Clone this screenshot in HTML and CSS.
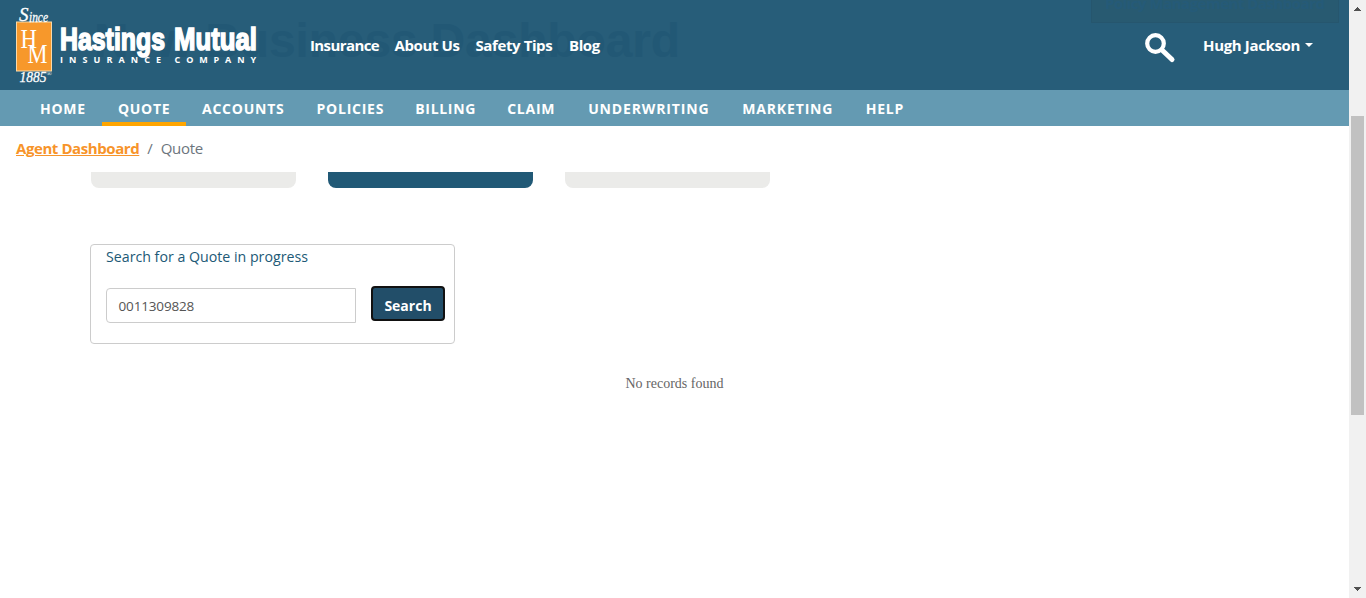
FILE: index.html
```html
<!DOCTYPE html>
<html lang="en">
<head>
<meta charset="utf-8">
<title>Quote - Hastings Mutual</title>
<link rel="stylesheet" href="styles.css">
</head>
<body>
<div class="page">
  <header class="topbar">
    <svg class="ghost" width="1349" height="90" aria-hidden="true">
      <text class="ghost-title" x="94" y="57" textLength="586">New Business Dashboard</text>
      <rect x="1091" y="-10" width="248" height="33" fill="#285a71"/>
      <path d="M1091.5 0V22.5H1338.5V0" fill="none" stroke="#26566e"/>
      <text class="ghost-button" x="1105" y="9" textLength="220">Policy Management Dashboard</text>
    </svg>
    <svg class="logo" width="262" height="90" role="img" aria-label="Hastings Mutual Insurance Company">
      <rect x="16.5" y="22" width="35" height="49" fill="#f7982b" stroke="#fbd9a8" stroke-width="1"/>
      <g class="serif">
        <text x="19" y="21" class="swash" font-size="19">S</text>
        <text x="29" y="21.500" class="swash" font-size="14" textLength="19" lengthAdjust="spacingAndGlyphs">ince</text>
        <text x="20.5" y="48" font-size="28" textLength="16.5" lengthAdjust="spacingAndGlyphs">H</text>
        <text x="27.5" y="63" font-size="28" textLength="20" lengthAdjust="spacingAndGlyphs">M</text>
        <text x="19.5" y="82" class="swash" font-size="15.500" textLength="27" lengthAdjust="spacingAndGlyphs">1885</text>
        <text x="46.500" y="76" font-size="7">®</text>
      </g>
      <g class="wordmark">
        <text x="60" y="50" textLength="105" lengthAdjust="spacingAndGlyphs">Hastings</text>
        <text x="174" y="50" textLength="83" lengthAdjust="spacingAndGlyphs">Mutual</text>
      </g>
      <g class="tagline">
        <text x="60" y="63" textLength="101">INSURANCE</text>
        <text x="174.500" y="63" textLength="81.500">COMPANY</text>
      </g>
    </svg>
    <nav class="sitelinks">
      <a class="link-insurance">Insurance</a><a class="link-about">About Us</a><a class="link-safety">Safety Tips</a><a>Blog</a>
    </nav>
    <svg class="search-icon" width="32" height="32" viewBox="0 0 32 32">
      <circle cx="11.500" cy="11.500" r="8.300" fill="none" stroke="#fff" stroke-width="4.200"/>
      <path d="M18 18L28 27.500" stroke="#fff" stroke-width="5" stroke-linecap="round"/>
    </svg>
    <div class="user">Hugh Jackson<i class="caret"></i></div>
  </header>
  <nav class="mainnav">
    <a>HOME</a><a class="active">QUOTE</a><a>ACCOUNTS</a><a>POLICIES</a><a class="billing">BILLING</a><a class="claim">CLAIM</a><a class="underwriting">UNDERWRITING</a><a class="marketing">MARKETING</a><a>HELP</a>
  </nav>
  <div class="crumbs"><a>Agent Dashboard</a><span class="slash">/</span><span class="current">Quote</span></div>
  <main>
    <div class="tiles"><div class="tile"></div><div class="tile selected"></div><div class="tile"></div></div>
    <section class="finder">
      <div class="finder-label">Search for a Quote in progress</div>
      <div class="finder-row">
        <div class="field">0011309828</div>
        <div class="button">Search</div>
      </div>
    </section>
    <div class="empty">No records found</div>
  </main>
</div>
<div class="scrollbar">
  <svg width="17" height="17" shape-rendering="crispEdges"><path d="M5 11H12L8.500 7Z" fill="#505050"/></svg>
  <div class="thumb"></div>
  <svg width="17" height="17" shape-rendering="crispEdges"><path d="M5 6H12L8.500 10Z" fill="#505050"/></svg>
</div>
</body>
</html>
```
FILE: styles.css
```css
* { box-sizing: border-box; }
body { margin: 0; display: flex; height: 598px; overflow: hidden; background: #fff; font-family: "Open Sans", "Noto Sans", sans-serif; }
.page { width: 1349px; }
.topbar { position: relative; display: flex; height: 90px; background: #275d79; color: #fff; }
.ghost { position: absolute; left: 0; top: 0; }
.ghost-title { font: bold 48px "Liberation Sans", sans-serif; fill: #225875; }
.ghost-button { font: bold 15px "Open Sans", sans-serif; fill: #255a78; }
.logo { position: relative; flex: none; }
.serif { font-family: "Liberation Serif", serif; fill: #fff; }
.swash { font-style: italic; stroke: #fff; stroke-width: .3px; }
.wordmark { font: bold 32px "Liberation Sans", sans-serif; fill: #fff; stroke: #fff; stroke-width: 1.6px; }
.tagline { font: bold 9px "Open Sans", sans-serif; fill: #fff; }
.sitelinks { position: relative; display: flex; gap: 16px; padding-left: 48px; font-size: 15px; font-weight: 700; line-height: 90px; letter-spacing: -.4px; white-space: nowrap; }
.link-insurance { width: 68.5px; letter-spacing: -.6px; }
.link-about { width: 65px; }
.link-safety { width: 77.5px; }
.search-icon { position: relative; margin: 32px 0 0 auto; }
.user { position: relative; width: 146px; margin-left: 27px; line-height: 90px; font-size: 15px; font-weight: 700; letter-spacing: -.35px; white-space: nowrap; }
.caret { display: inline-block; margin-left: 5px; vertical-align: 4px; border: 4px solid transparent; border-top-color: #fff; border-bottom: 0; }
.mainnav { display: flex; height: 36px; padding-left: 24px; background: #649ab2; color: #fff; font-size: 14px; font-weight: 700; line-height: 38px; letter-spacing: .76px; }
.mainnav a { padding: 0 16px; white-space: nowrap; }
.mainnav a:first-child { width: 78px; }
.mainnav .active { width: 84px; border-bottom: 4px solid #ffa500; letter-spacing: .7px; }
.mainnav .billing { width: 92px; margin-left: -1px; letter-spacing: .7px; }
.mainnav .claim { width: 81px; }
.mainnav .underwriting { width: 154px; letter-spacing: .85px; }
.mainnav .marketing { width: 123.5px; letter-spacing: .85px; }
.crumbs { display: flex; height: 46px; padding-left: 16px; line-height: 45px; font-size: 15px; color: #6c757d; }
.crumbs a { color: #f7942a; font-weight: 700; text-decoration: underline; letter-spacing: -.42px; }
.slash { margin: 0 8px; }
.current { letter-spacing: -.35px; }
.tiles { display: flex; gap: 32px; padding-left: 91px; }
.tile { width: 205px; height: 16px; border-radius: 0 0 8px 8px; background: #ebebe9; }
.tile.selected { background: #215976; }
.finder { width: 365px; height: 100px; margin: 56px 0 0 90px; padding: 0 9px 0 15px; border: 1px solid #ccc; border-radius: 4px; }
.finder-label { height: 41px; line-height: 24px; font-size: 14.2px; color: #215976; white-space: nowrap; }
.finder-row { display: flex; justify-content: space-between; }
.field { width: 250px; height: 35px; margin-top: 2px; padding-left: 11.5px; border: 1px solid #ccc; border-radius: 4px 0 0 4px; font-size: 13.500px; letter-spacing: -.15px; line-height: 34px; color: #555; }
.button { width: 74px; height: 35px; border: 2px solid #111; border-radius: 4px; background: #224e69; color: #fff; font-size: 14px; font-weight: 700; text-align: center; line-height: 35px; }
.empty { margin-top: 32px; text-align: center; font: 14px/16px "Liberation Serif", serif; color: #666; }
.scrollbar { display: flex; flex-direction: column; width: 17px; background: #f1f1f1; }
.scrollbar svg:last-child { margin-top: auto; }
.thumb { width: 13px; height: 299px; margin: 99px 0 0 2px; background: #c1c1c1; }
```
